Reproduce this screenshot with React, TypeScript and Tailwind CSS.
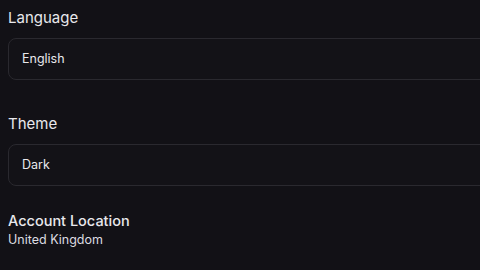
export default function App() {
  return (
    <div
      className="h-[270px] w-[480px] overflow-hidden bg-[#121116] pl-2 pt-2 text-[#e8e8ec]"
      style={{ fontFamily: "Inter, 'Noto Sans', sans-serif" }}
    >
      <Field label="Language" value="English" />
      <div className="h-[34px]" />
      <Field label="Theme" value="Dark" />
      <div className="mt-[25px]">
        <div className="text-[14.5px] font-medium leading-5">Account Location</div>
        <div className="mt-px text-[12.5px] leading-4 text-[#dcdce0]">United Kingdom</div>
      </div>
    </div>
  );
}

function Field({ label, value }: { label: string; value: string }) {
  return (
    <div>
      <div className="text-[15px] leading-5">{label}</div>
      <div className="mt-[10px] flex h-[42px] w-[500px] items-center rounded-lg border border-[#2a292f] bg-[#131217] pl-[13px] pt-px text-[12.5px]">
        {value}
      </div>
    </div>
  );
}
